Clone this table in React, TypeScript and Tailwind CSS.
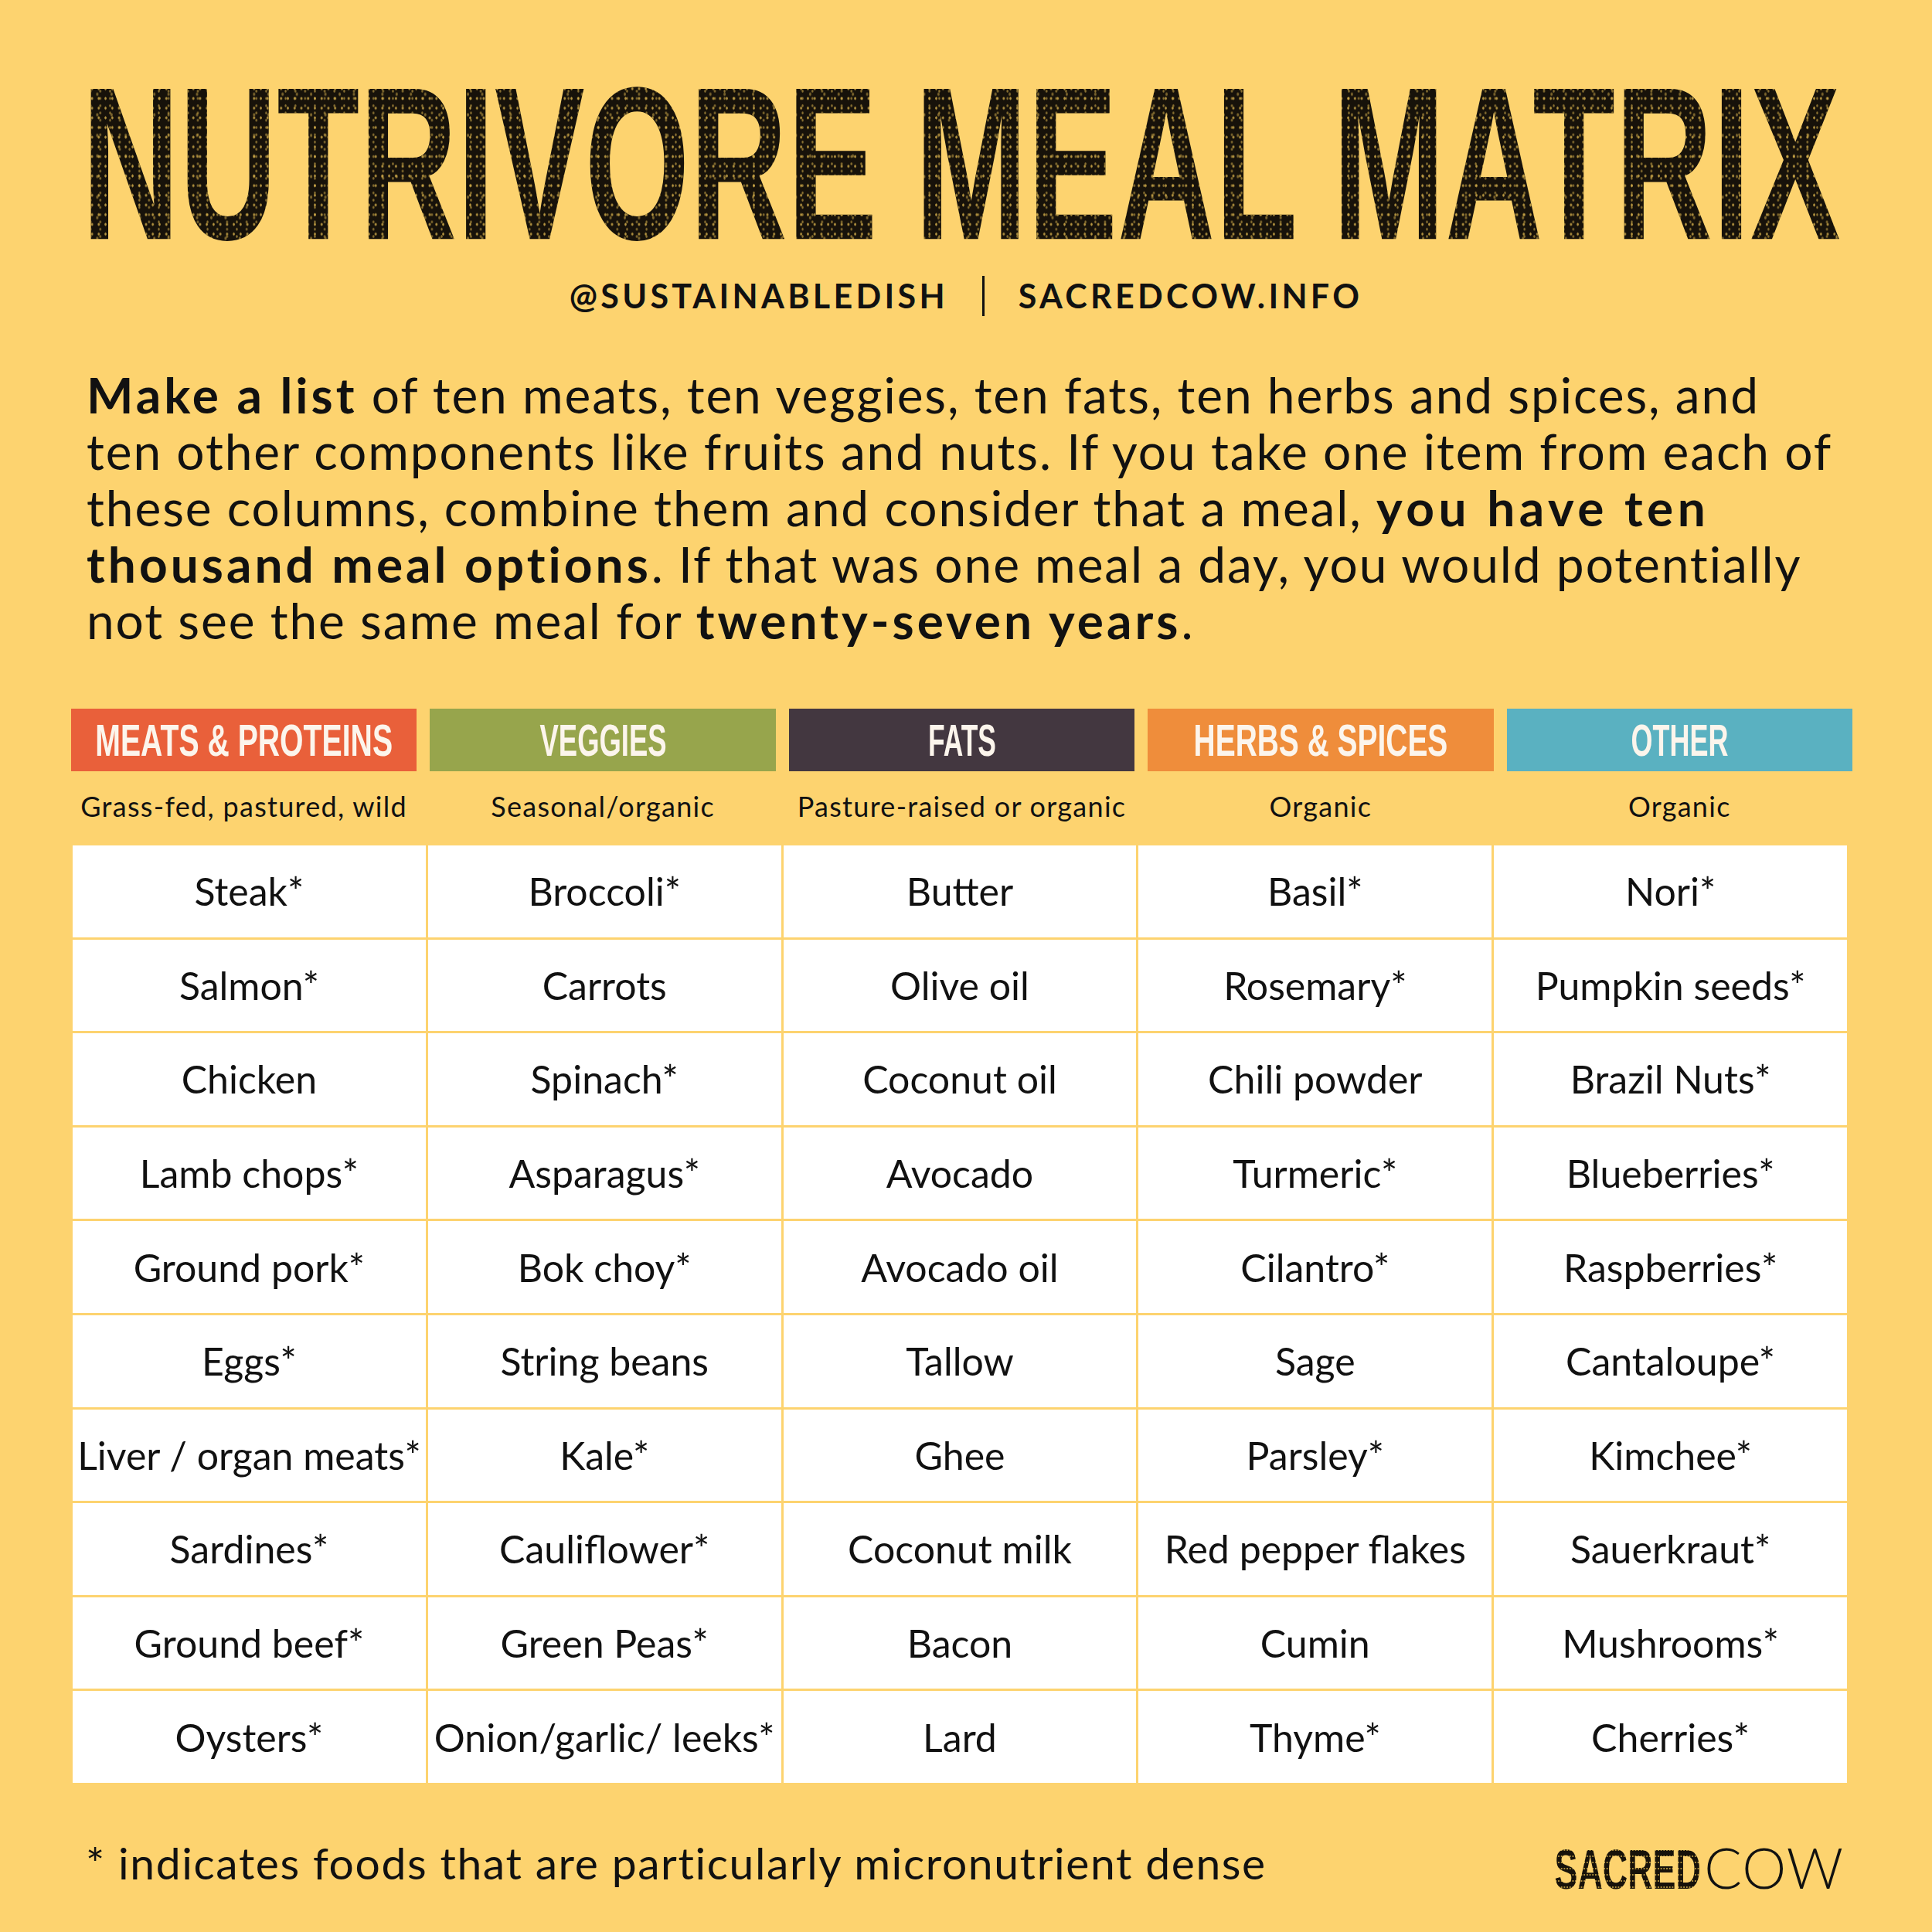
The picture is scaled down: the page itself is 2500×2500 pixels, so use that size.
import React from "react";

const headers = [
  { label: "MEATS & PROTEINS", bg: "bg-[#E9603A]", scale: "scale-x-[0.676]", sub: "Grass-fed, pastured, wild" },
  { label: "VEGGIES", bg: "bg-[#97A54C]", scale: "scale-x-[0.628]", sub: "Seasonal/organic" },
  { label: "FATS", bg: "bg-[#433740]", scale: "scale-x-[0.61]", sub: "Pasture-raised or organic" },
  { label: "HERBS & SPICES", bg: "bg-[#EF8D3B]", scale: "scale-x-[0.671]", sub: "Organic" },
  { label: "OTHER", bg: "bg-[#5AB1C1]", scale: "scale-x-[0.62]", sub: "Organic" },
];

const columns = [
  ["Steak*", "Salmon*", "Chicken", "Lamb chops*", "Ground pork*", "Eggs*", "Liver / organ meats*", "Sardines*", "Ground beef*", "Oysters*"],
  ["Broccoli*", "Carrots", "Spinach*", "Asparagus*", "Bok choy*", "String beans", "Kale*", "Cauliflower*", "Green Peas*", "Onion/garlic/ leeks*"],
  ["Butter", "Olive oil", "Coconut oil", "Avocado", "Avocado oil", "Tallow", "Ghee", "Coconut milk", "Bacon", "Lard"],
  ["Basil*", "Rosemary*", "Chili powder", "Turmeric*", "Cilantro*", "Sage", "Parsley*", "Red pepper flakes", "Cumin", "Thyme*"],
  ["Nori*", "Pumpkin seeds*", "Brazil Nuts*", "Blueberries*", "Raspberries*", "Cantaloupe*", "Kimchee*", "Sauerkraut*", "Mushrooms*", "Cherries*"],
];

const rows = Array.from({ length: 10 }, (_, r) => columns.map((c) => c[r]));

function B({ children }: { children: React.ReactNode }) {
  return <span className="font-bold tracking-[4px]">{children}</span>;
}

export default function App() {
  return (
    <div className="w-[2500px] h-[2500px] bg-[#FDD36F] flex flex-col text-[#111] overflow-hidden">
      {/* Title */}
      <div className="mt-[71px] h-[282px] flex justify-center items-center">
        <span className="whitespace-nowrap font-['Liberation_Sans',sans-serif] font-bold text-[180px] leading-[180px] scale-x-[0.971] scale-y-[1.567] -translate-x-[6px] bg-[#17120a] bg-[radial-gradient(circle,rgba(225,185,80,0.8)_0.9px,transparent_1.6px),radial-gradient(circle,rgba(225,185,80,0.6)_0.8px,transparent_1.5px),radial-gradient(circle,rgba(225,185,80,0.5)_1px,transparent_1.8px)] bg-[length:9px_8px,13px_6px,19px_17px] bg-[position:0_0,5px_3px,11px_7px] bg-clip-text text-transparent">
          NUTRIVORE MEAL MATRIX
        </span>
      </div>

      {/* Handles */}
      <div className="mt-[8px] h-[43px] flex justify-center items-center font-['Lato',sans-serif] font-bold text-[43px] leading-[43px] tracking-[4.3px]">
        <span>@SUSTAINABLEDISH</span>
        <span className="mx-[44px] w-[3px] h-[52px] bg-[#111] shrink-0" />
        <span>SACREDCOW.INFO</span>
      </div>

      {/* Paragraph */}
      <div className="mt-[70px] pl-[112px] font-['Lato',sans-serif] text-[64px] leading-[73px] tracking-[1.9px] whitespace-nowrap">
        <div>
          <B>Make a list</B> of ten meats, ten veggies, ten fats, ten herbs and spices, and
        </div>
        <div>ten other components like fruits and nuts. If you take one item from each of</div>
        <div>
          these columns, combine them and consider that a meal, <span className="font-bold tracking-[5.5px]">you have ten</span>
        </div>
        <div>
          <B>thousand meal options</B>. If that was one meal a day, you would potentially
        </div>
        <div>
          not see the same meal for <B>twenty-seven years</B>.
        </div>
      </div>

      {/* Column headers */}
      <div className="mt-[78px] ml-[92px] w-[2305px] grid grid-cols-5 gap-[17px]">
        {headers.map((h) => (
          <div key={h.label} className={`${h.bg} h-[81px] flex items-center justify-center overflow-hidden`}>
            <span
              className={`${h.scale} whitespace-nowrap font-['Liberation_Sans',sans-serif] font-bold text-[58px] leading-none text-[#FCF5EC]`}
            >
              {h.label}
            </span>
          </div>
        ))}
      </div>

      {/* Subtitles */}
      <div className="mt-[28px] ml-[92px] w-[2305px] grid grid-cols-5 gap-[17px] font-['Lato',sans-serif] text-[36px] leading-[34px] tracking-[1.3px] h-[34px]">
        {headers.map((h) => (
          <div key={h.label} className="text-center whitespace-nowrap">
            {h.sub}
          </div>
        ))}
      </div>

      {/* Table */}
      <div className="mt-[34px] ml-[94px] w-[2296px] h-[1213px] grid grid-cols-5 grid-rows-[repeat(10,1fr)] gap-[3px] font-['Lato',sans-serif] text-[50px] leading-none">
        {rows.map((row, r) =>
          row.map((item, c) => (
            <div key={`${r}-${c}`} className="bg-white flex items-center justify-center whitespace-nowrap">
              {item}
            </div>
          ))
        )}
      </div>

      {/* Footer */}
      <div className="mt-[73px] flex items-start justify-between pl-[111px] pr-[114px]">
        <div className="mt-[3px] font-['Lato',sans-serif] text-[57px] leading-[55px] tracking-[1.6px]">
          * indicates foods that are particularly micronutrient dense
        </div>
        <div className="flex items-start gap-[4px]">
          <div className="w-[190px] mt-[2px] flex justify-center">
            <span className="whitespace-nowrap font-['Liberation_Sans',sans-serif] font-bold text-[73px] leading-[73px] scale-x-[0.614] bg-[#17120a] bg-[radial-gradient(circle,rgba(225,185,80,0.85)_0.8px,transparent_1.5px)] bg-[length:6px_8px] bg-clip-text text-transparent">
              SACRED
            </span>
          </div>
          <span className="whitespace-nowrap font-['Lato',sans-serif] font-light text-[72px] leading-[72px] tracking-[1px]">
            COW
          </span>
        </div>
      </div>
    </div>
  );
}
